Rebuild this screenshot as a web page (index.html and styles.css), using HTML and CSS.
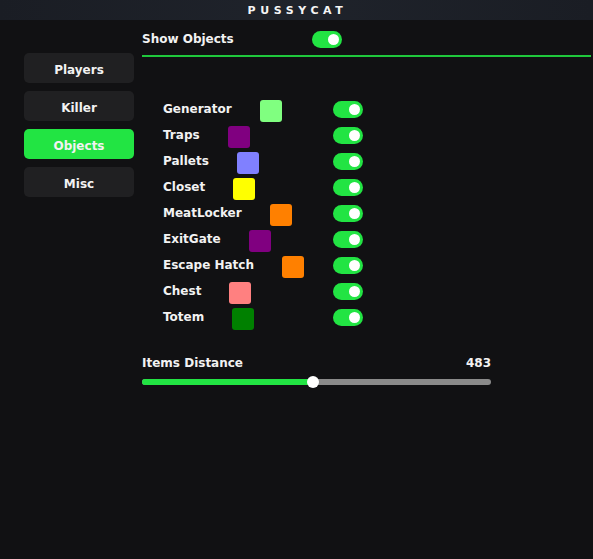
FILE: index.html
```html
<!DOCTYPE html>
<html lang="en">
<head>
    <meta charset="UTF-8">
    <meta name="viewport" content="width=device-width, initial-scale=1.0">
    <title>Pussycat</title>
    <link rel="stylesheet" href="styles.css">
</head>
<body>
    <div class="titlebar">PUSSYCAT</div>

    <div class="main">
        <div class="sidebar">
            <button class="tab-btn">Players</button>
            <button class="tab-btn">Killer</button>
            <button class="tab-btn active">Objects</button>
            <button class="tab-btn">Misc</button>
        </div>

        <div class="content">
            <div class="section-header">
                <div class="section-title">Show Objects</div>
                <div class="toggle on"></div>
            </div>
            <div class="divider"></div>

            <div class="object-list">
                <div class="object-row">
                    <div class="object-name">Generator <span class="swatch" style="background:#80ff80"></span></div>
                    <div class="toggle on"></div>
                </div>
                <div class="object-row">
                    <div class="object-name">Traps <span class="swatch" style="background:#800080"></span></div>
                    <div class="toggle on"></div>
                </div>
                <div class="object-row">
                    <div class="object-name">Pallets <span class="swatch" style="background:#8080ff"></span></div>
                    <div class="toggle on"></div>
                </div>
                <div class="object-row">
                    <div class="object-name">Closet <span class="swatch" style="background:#ffff00"></span></div>
                    <div class="toggle on"></div>
                </div>
                <div class="object-row">
                    <div class="object-name">MeatLocker <span class="swatch" style="background:#ff8000"></span></div>
                    <div class="toggle on"></div>
                </div>
                <div class="object-row">
                    <div class="object-name">ExitGate <span class="swatch" style="background:#800080"></span></div>
                    <div class="toggle on"></div>
                </div>
                <div class="object-row">
                    <div class="object-name">Escape Hatch <span class="swatch" style="background:#ff8000"></span></div>
                    <div class="toggle on"></div>
                </div>
                <div class="object-row">
                    <div class="object-name">Chest <span class="swatch" style="background:#ff8080"></span></div>
                    <div class="toggle on"></div>
                </div>
                <div class="object-row">
                    <div class="object-name">Totem <span class="swatch" style="background:#008000"></span></div>
                    <div class="toggle on"></div>
                </div>
            </div>

            <div class="slider">
                <div class="slider-head">
                    <span>Items Distance</span>
                    <span>483</span>
                </div>
                <div class="slider-track">
                    <div class="slider-fill" style="width:49%">
                        <div class="slider-knob"></div>
                    </div>
                </div>
            </div>
        </div>
    </div>
</body>
</html>
```

FILE: styles.css
```css
* {
    margin: 0;
    padding: 0;
    box-sizing: border-box;
}
body {
    font-family: 'DejaVu Sans', Verdana, sans-serif;
    font-weight: 700;
    font-size: 12px;
    background: #111113;
    color: #f2f2f2;
    min-height: 100vh;
}
.titlebar {
    height: 20px;
    background: linear-gradient(90deg, #1a1d24 0%, #1f232b 50%, #1a1d24 100%);
    color: #f4f4f4;
    font-size: 11px;
    letter-spacing: 4.6px;
    text-align: center;
    line-height: 22px;
    padding-left: 2px;
}
.main {
    display: flex;
}
.sidebar {
    width: 142px;
    padding: 33px 0 0 24px;
    display: flex;
    flex-direction: column;
    gap: 8px;
}
.tab-btn {
    width: 110px;
    height: 30px;
    padding-top: 3px;
    border: none;
    border-radius: 5px;
    background: #202022;
    color: #f2f2f2;
    font-family: inherit;
    font-weight: 700;
    font-size: 12px;
}
.tab-btn.active {
    background: #22e443;
}
.content {
    flex: 1;
    padding: 10px 2px 0 0;
}
.section-header {
    display: flex;
    align-items: center;
    height: 18px;
}
.section-title {
    width: 170px;
}
.divider {
    height: 2px;
    background: #1fc83c;
    margin-top: 7px;
}
.object-list {
    padding: 39px 0 0 21px;
}
.object-row {
    display: flex;
    align-items: center;
    height: 26px;
}
.object-name {
    width: 170px;
    display: flex;
    align-items: center;
}
.swatch {
    width: 22px;
    height: 22px;
    border-radius: 3px;
    margin: 4px 0 0 28px;
}
.toggle {
    width: 30px;
    height: 17px;
    border-radius: 9px;
    background: #55555a;
    position: relative;
}
.toggle.on {
    background: #22e443;
}
.toggle::after {
    content: '';
    position: absolute;
    top: 3px;
    left: 3px;
    width: 11px;
    height: 11px;
    border-radius: 50%;
    background: #ffffff;
}
.toggle.on::after {
    left: 16px;
}
.slider {
    width: 349px;
    margin-top: 25px;
}
.slider-head {
    display: flex;
    justify-content: space-between;
    height: 16px;
    line-height: 16px;
}
.slider-track {
    margin-top: 8px;
    height: 6px;
    border-radius: 3px;
    background: #8a8a8a;
}
.slider-fill {
    height: 100%;
    border-radius: 3px;
    background: #22e443;
    position: relative;
}
.slider-knob {
    position: absolute;
    right: -6px;
    top: -3px;
    width: 12px;
    height: 12px;
    border-radius: 50%;
    background: #ffffff;
}
```
